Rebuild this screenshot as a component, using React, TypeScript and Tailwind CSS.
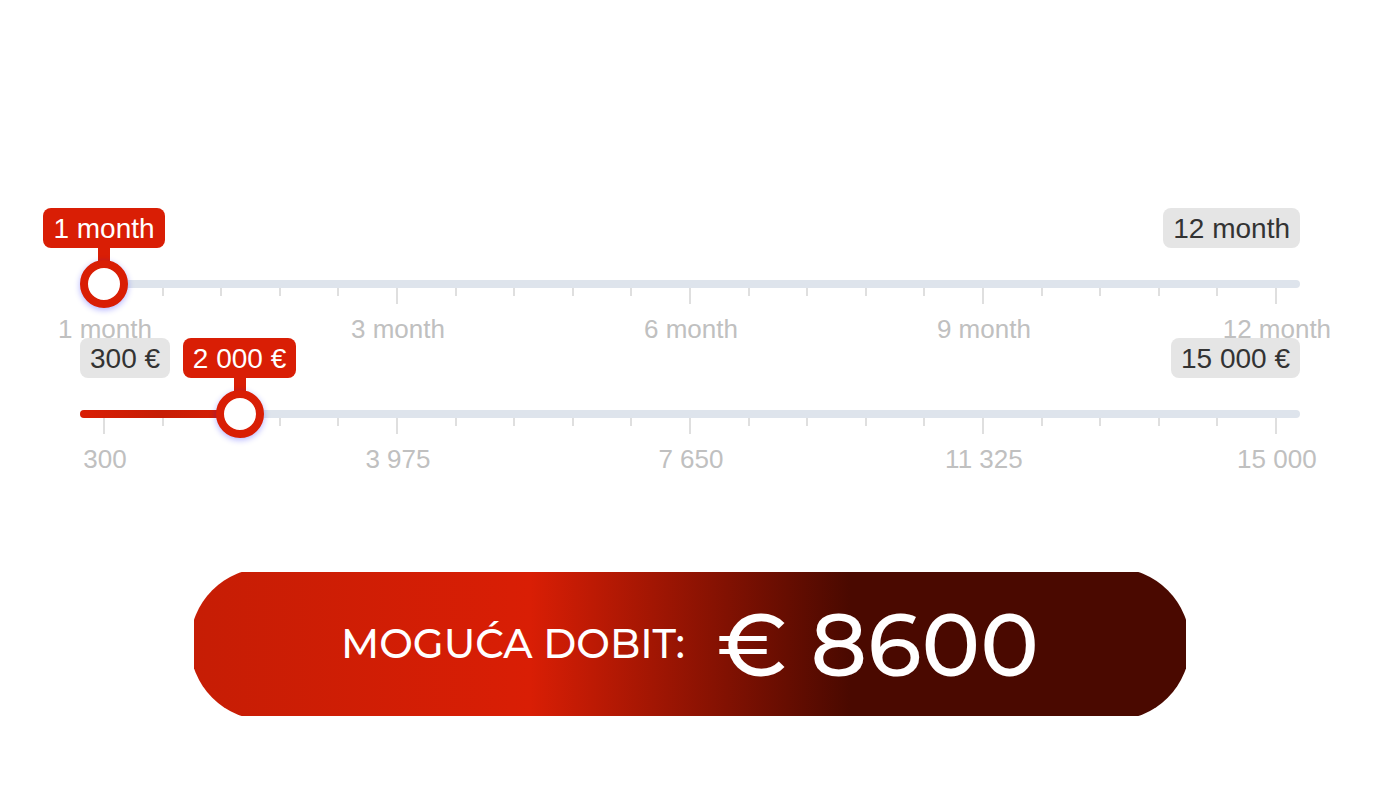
import { useId, useState } from 'react';

type SliderProps = {
  name: string;
  min: number;
  max: number;
  initial: number;
  format: (value: number) => string;
  marks: string[];
  fill: string;
};

const group = (value: number) => String(value).replace(/\B(?=(\d{3})+$)/g, ' ');

const badge = 'flex h-10 items-center whitespace-nowrap rounded-lg px-[10px] pt-[2px] text-[28px]';

function RangeSlider({ name, min, max, initial, format, marks, fill }: SliderProps) {
  const id = useId();
  const [value, setValue] = useState(initial);
  const ratio = (value - min) / (max - min);
  const ticks = Array.from({ length: 21 }, (_, i) => i);

  return (
    <div className="relative h-[130px]">
      {ratio > 0.08 && <span className={`${badge} absolute left-0 top-0 bg-[#e5e5e5] text-[#333]`}>{format(min)}</span>}
      {ratio < 0.85 && <span className={`${badge} absolute right-0 top-0 bg-[#e5e5e5] text-[#333]`}>{format(max)}</span>}

      <div className="flex flex-col pt-[72px]">
        <div className="h-2 shrink-0 overflow-hidden rounded-full bg-[#dee4ec]">
          <div
            className={`h-full ${fill}`}
            style={{ width: `calc(24px + (100% - 48px) * ${ratio})` }}
          />
        </div>
        <div className="flex justify-between px-6" aria-hidden="true">
          {ticks.map((i) => (
            <div key={i} className="flex w-0 flex-col items-center">
              <span className={`w-[2px] shrink-0 bg-[#dfdfdf] ${i % 5 === 0 ? 'h-4' : 'h-2'}`} />
              {i % 5 === 0 && (
                <span className="mt-2 whitespace-nowrap pl-[2px] text-[26px] leading-[34px] text-[#c0c0c0]">
                  {marks[i / 5]}
                </span>
              )}
            </div>
          ))}
        </div>
      </div>

      <div className="pointer-events-none absolute inset-x-6 top-0">
        <div className="absolute flex w-0 flex-col items-center" style={{ left: `${ratio * 100}%` }}>
          <output htmlFor={id} className={`${badge} bg-[#d91e05] text-white`}>
            {format(value)}
          </output>
          <span className="h-[14px] w-3 bg-[#d91e05]" />
        </div>
      </div>

      <input
        id={id}
        aria-label={name}
        type="range"
        min={min}
        max={max}
        value={value}
        onChange={(event) => setValue(Number(event.target.value))}
        className="absolute inset-x-0 top-[52px] m-0 h-12 w-full cursor-pointer appearance-none bg-transparent outline-none [&::-webkit-slider-thumb]:size-12 [&::-webkit-slider-thumb]:appearance-none [&::-webkit-slider-thumb]:rounded-full [&::-webkit-slider-thumb]:border-8 [&::-webkit-slider-thumb]:border-solid [&::-webkit-slider-thumb]:border-[#d91e05] [&::-webkit-slider-thumb]:bg-white [&::-webkit-slider-thumb]:shadow-[0_2px_6px_rgba(0,0,255,0.3)]"
      />
    </div>
  );
}

export default function App() {
  return (
    <main className="min-h-screen overflow-x-hidden bg-white px-20 pt-[208px] font-['Liberation_Sans',Arial,sans-serif]">
      <RangeSlider
        name="Period"
        min={1}
        max={12}
        initial={1}
        format={(value) => `${value} month`}
        marks={['1 month', '3 month', '6 month', '9 month', '12 month']}
        fill="bg-transparent"
      />
      <RangeSlider
        name="Amount"
        min={300}
        max={15000}
        initial={2000}
        format={(value) => `${group(value)} €`}
        marks={['300', '3 975', '7 650', '11 325', '15 000']}
        fill="bg-linear-to-r from-[#d91e05] via-[#c61d05] to-[#d91e05]"
      />
      <button
        type="button"
        className="mx-auto mt-[100px] flex h-[152px] w-full max-w-[1000px] items-center justify-center gap-8 rounded-full bg-[linear-gradient(90deg,#c61d05_0%,#d91e05_34%,#4a0900_66%)] font-['Montserrat','Inter',sans-serif] font-medium text-white [clip-path:inset(4px)]"
      >
        <span className="text-[40px]">MOGUĆA DOBIT:</span>
        <span className="pt-[2px] text-[88px]">€ 8600</span>
      </button>
    </main>
  );
}
